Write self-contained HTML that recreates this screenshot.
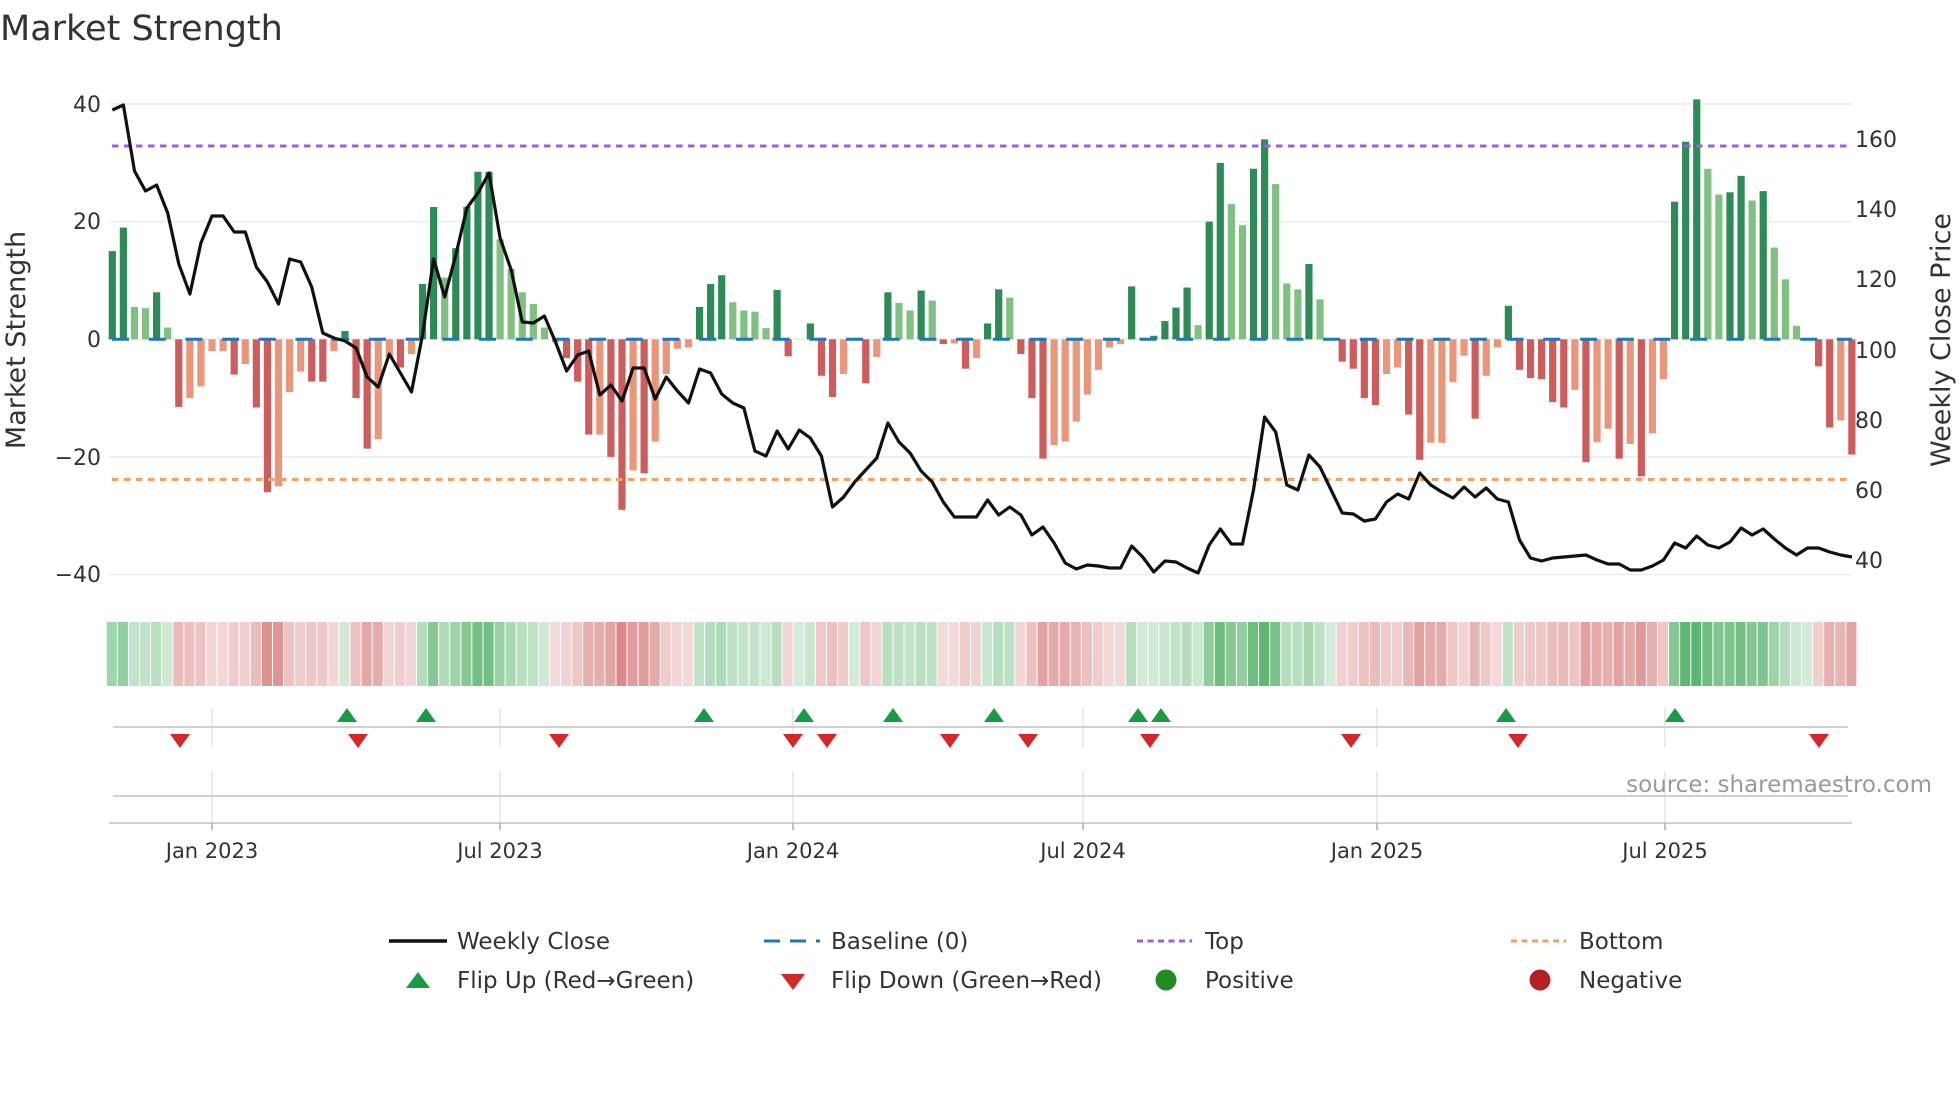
<!DOCTYPE html>
<html><head><meta charset="utf-8"><style>
html,body{margin:0;padding:0;background:#fff;width:1960px;height:1102px;overflow:hidden}
svg{display:block}
text{font-family:"DejaVu Sans","Liberation Sans",sans-serif;fill:#333}
</style></head><body>
<svg id="s" width="1960" height="1102" viewBox="0 0 1960 1102" xmlns="http://www.w3.org/2000/svg">
<text x="0" y="40" font-size="35">Market Strength</text>
<g id="grid" stroke="#ececec" stroke-width="1.5">
<line x1="109" x2="1852" y1="104" y2="104"/><line x1="109" x2="1852" y1="221.6" y2="221.6"/>
<line x1="109" x2="1852" y1="339.3" y2="339.3"/><line x1="109" x2="1852" y1="457" y2="457"/>
<line x1="109" x2="1852" y1="574.5" y2="574.5"/>
</g>
<g font-size="22" text-anchor="end">
<text x="101" y="112">40</text><text x="101" y="229">20</text><text x="101" y="347">0</text>
<text x="101" y="465">−20</text><text x="101" y="582">−40</text>
</g>
<g font-size="22">
<text x="1855" y="147">160</text><text x="1855" y="217">140</text><text x="1855" y="287">120</text>
<text x="1855" y="358">100</text><text x="1855" y="428">80</text><text x="1855" y="498">60</text>
<text x="1855" y="568">40</text>
</g>
<text font-size="27" text-anchor="middle" transform="translate(25,340) rotate(-90)">Market Strength</text>
<text font-size="27" text-anchor="middle" transform="translate(1950,340) rotate(-90)">Weekly Close Price</text>
<g id="bars"></g>
<line x1="112" x2="1852" y1="339.3" y2="339.3" stroke="#1f77b4" stroke-width="3" stroke-dasharray="17 19.7"/>
<line x1="112" x2="1852" y1="146" y2="146" stroke="#9b5fe0" stroke-width="3" stroke-dasharray="6.5 5.5"/>
<line x1="112" x2="1852" y1="479.5" y2="479.5" stroke="#f0a060" stroke-width="3" stroke-dasharray="6.5 5.5"/>
<polyline id="price" fill="none" stroke="#111" stroke-width="3.2" stroke-linejoin="round"/>
<g transform="translate(0,-4)">
<g id="heat"></g>
<g stroke="#e4e4e4" stroke-width="1.5">
<line x1="212" x2="212" y1="712" y2="751"/><line x1="500" x2="500" y1="712" y2="751"/>
<line x1="793" x2="793" y1="712" y2="751"/><line x1="1083" x2="1083" y1="712" y2="751"/>
<line x1="1377" x2="1377" y1="712" y2="751"/><line x1="1665" x2="1665" y1="712" y2="751"/>
<line x1="212" x2="212" y1="775" y2="827"/><line x1="500" x2="500" y1="775" y2="827"/>
<line x1="793" x2="793" y1="775" y2="827"/><line x1="1083" x2="1083" y1="775" y2="827"/>
<line x1="1377" x2="1377" y1="775" y2="827"/><line x1="1665" x2="1665" y1="775" y2="827"/>
</g>
<line x1="113" x2="1848" y1="731" y2="731" stroke="#d0d0d0" stroke-width="2"/>
<line x1="113" x2="1848" y1="800" y2="800" stroke="#d0d0d0" stroke-width="2"/>
<line x1="109" x2="1852" y1="827" y2="827" stroke="#d0d0d0" stroke-width="2"/>
<g stroke="#aaa" stroke-width="1.5">
<line x1="212" x2="212" y1="827" y2="834"/><line x1="500" x2="500" y1="827" y2="834"/>
<line x1="793" x2="793" y1="827" y2="834"/><line x1="1083" x2="1083" y1="827" y2="834"/>
<line x1="1377" x2="1377" y1="827" y2="834"/><line x1="1665" x2="1665" y1="827" y2="834"/>
</g>
<g id="tri"></g>
<g font-size="21" text-anchor="middle">
<text x="212" y="862">Jan 2023</text><text x="500" y="862">Jul 2023</text>
<text x="793" y="862">Jan 2024</text><text x="1083" y="862">Jul 2024</text>
<text x="1377" y="862">Jan 2025</text><text x="1665" y="862">Jul 2025</text>
</g>
<text x="1932" y="796" font-size="23" text-anchor="end" style="fill:#999">source: sharemaestro.com</text>
<g font-size="23">
<line x1="389" x2="447" y1="945" y2="945" stroke="#111" stroke-width="3.5"/>
<text x="457" y="953">Weekly Close</text>
<line x1="764" x2="820" y1="945" y2="945" stroke="#1f77b4" stroke-width="3" stroke-dasharray="16 10"/>
<text x="831" y="953">Baseline (0)</text>
<line x1="1137" x2="1192" y1="945" y2="945" stroke="#9b5fe0" stroke-width="3" stroke-dasharray="6 4.5"/>
<text x="1205" y="953">Top</text>
<line x1="1511" x2="1566" y1="945" y2="945" stroke="#f0a060" stroke-width="3" stroke-dasharray="6 4.5"/>
<text x="1579" y="953">Bottom</text>
<polygon points="406,992 430,992 418,976" fill="#1a9a45"/>
<text x="457" y="992">Flip Up (Red→Green)</text>
<polygon points="781,978 805,978 793,994" fill="#d62728"/>
<text x="831" y="992">Flip Down (Green→Red)</text>
<circle cx="1166" cy="984" r="10.5" fill="#228b22"/>
<text x="1205" y="992">Positive</text>
<circle cx="1540" cy="984" r="10.5" fill="#b22222"/>
<text x="1579" y="992">Negative</text>
</g>
</g>
</svg>
<script>
var NS="http://www.w3.org/2000/svg";
var V=[[15,'G'],[19,'G'],[5.5,'g'],[5.3,'g'],[8,'G'],[2,'g'],[-11.5,'R'],[-10,'r'],[-8,'r'],[-2,'r'],[-2,'r'],[-6,'R'],[-4.2,'r'],[-11.6,'R'],[-26,'R'],[-25,'r'],[-9,'r'],[-5.5,'r'],[-7.2,'R'],[-7.2,'R'],[-2,'r'],[1.4,'G'],[-10,'R'],[-18.6,'R'],[-17,'r'],[-3,'r'],[-4.8,'R'],[-2.5,'r'],[9.4,'G'],[22.5,'G'],[10.5,'g'],[15.5,'G'],[22.5,'G'],[28.5,'G'],[28.5,'G'],[17,'g'],[12,'g'],[8,'g'],[6,'g'],[2,'g'],
[-0.5,'r'],[-3.2,'R'],[-7.2,'R'],[-16.2,'R'],[-16.2,'r'],[-20,'R'],[-29,'R'],[-22.3,'r'],[-22.8,'R'],[-17.4,'r'],[-5.9,'r'],[-1.6,'r'],[-1.4,'r'],[5.5,'G'],[9.4,'G'],[10.9,'G'],[6.3,'g'],[4.9,'g'],[4.7,'g'],[1.9,'g'],[8.4,'G'],[-2.9,'R'],[0,'g'],[2.7,'G'],[-6.2,'R'],[-9.8,'R'],[-5.9,'r'],[0,'r'],[-7.5,'R'],[-3,'r'],[8,'G'],[6.2,'g'],[4.9,'g'],[8.3,'G'],[6.6,'g'],[-0.8,'R'],[-0.7,'r'],[-5,'R'],[-3.2,'r'],[2.7,'G'],
[8.5,'G'],[7.1,'g'],[-2.5,'R'],[-10,'R'],[-20.3,'R'],[-18,'r'],[-17.4,'r'],[-14,'r'],[-9.4,'r'],[-5.2,'r'],[-1.4,'r'],[-0.8,'r'],[9,'G'],[0.3,'g'],[0.6,'G'],[3.1,'G'],[5.4,'G'],[8.8,'G'],[2.4,'g'],[20,'G'],[30,'G'],[23,'g'],[19.4,'g'],[29,'G'],[34,'G'],[26.4,'g'],[9.5,'g'],[8.5,'g'],[12.8,'G'],[6.8,'g'],[0.2,'g'],[-3.8,'R'],[-5,'R'],[-10,'R'],[-11.2,'R'],[-5.9,'r'],[-4.8,'r'],[-12.8,'R'],[-20.5,'R'],[-17.6,'r'],
[-17.6,'r'],[-7.3,'r'],[-2.8,'r'],[-13.5,'R'],[-6.2,'r'],[-1.4,'r'],[5.7,'G'],[-5.2,'R'],[-6.6,'R'],[-6.8,'R'],[-10.7,'R'],[-11.6,'R'],[-8.6,'r'],[-20.9,'R'],[-17.5,'r'],[-15.2,'r'],[-20.3,'R'],[-17.8,'r'],[-23.3,'R'],[-16,'r'],[-6.8,'r'],[23.4,'G'],[33.6,'G'],[40.8,'G'],[29,'g'],[24.6,'g'],[25,'G'],[27.8,'G'],[23.6,'g'],[25.2,'G'],[15.6,'g'],[10.2,'g'],[2.3,'g'],[0.2,'g'],[-4.6,'R'],[-15,'R'],[-13.8,'r'],[-19.6,'R']];
var P=[110,105,171,191,185,213,264,294,243,216,216,232,232,267,282,304,259,262,287,333,338,341,348,377,387,354,373,392,335,259,297,255,208,193,173,238,270,322,323,316,
342,371,355,351,395,385,401,368,368,399,377,391,403,369,373,394,403,408,451,456,431,449,430,438,456,507,497,482,470,458,423,442,453,471,482,502,517,517,517,500,
515,507,515,535,527,543,563,569,565,566,568,568,546,557,572,561,562,568,573,545,529,544,544,490,417,432,485,490,455,467,490,513,514,521,519,502,494,499,473,485,
492,498,487,497,488,499,502,540,558,561,558,557,556,555,560,564,564,570,570,566,560,543,548,536,545,548,542,528,535,529,539,548,555,548,548,552,555,557];
var C={G:'#2e8b57',g:'#80c080',R:'#cd5c5c',r:'#e9967a'};
var PITCH=11.08;
var bars=document.getElementById('bars'),heat=document.getElementById('heat'),pts=[];
for(var i=0;i<V.length;i++){
 var cx=112.3+PITCH*i,v=V[i][0],y0=339.3,y1=339.3-v*5.88;
 var r=document.createElementNS(NS,'rect');
 r.setAttribute('x',cx-3.6);r.setAttribute('width',7.2);
 r.setAttribute('y',Math.min(y0,y1));r.setAttribute('height',Math.abs(y1-y0));
 r.setAttribute('fill',C[V[i][1]]);bars.appendChild(r);
 var a=Math.min(Math.abs(v)/35,1),h=document.createElementNS(NS,'rect');
 var hx=112.3+PITCH*(i-0.5);
 h.setAttribute('x',hx);h.setAttribute('width',PITCH-1);h.setAttribute('y',626);h.setAttribute('height',64);
 h.setAttribute('fill',v>=0?'rgb(56,165,80)':'rgb(205,92,92)');
 h.setAttribute('fill-opacity',(0.22+0.6*a).toFixed(2));heat.appendChild(h);
 if(i<P.length)pts.push(cx.toFixed(1)+','+P[i]);
}
document.getElementById('price').setAttribute('points',pts.join(' '));
var tri=document.getElementById('tri');
[347,426,704,804,893,994,1138,1161,1506,1675].forEach(function(x){var p=document.createElementNS(NS,'polygon');p.setAttribute('points',(x-10)+',726 '+(x+10)+',726 '+x+',712');p.setAttribute('fill','#1a9a45');tri.appendChild(p);});
[180,358,559,793,827,950,1028,1150,1351,1518,1819].forEach(function(x){var p=document.createElementNS(NS,'polygon');p.setAttribute('points',(x-10)+',738 '+(x+10)+',738 '+x+',752');p.setAttribute('fill','#d62728');tri.appendChild(p);});
</script>
</body></html>
